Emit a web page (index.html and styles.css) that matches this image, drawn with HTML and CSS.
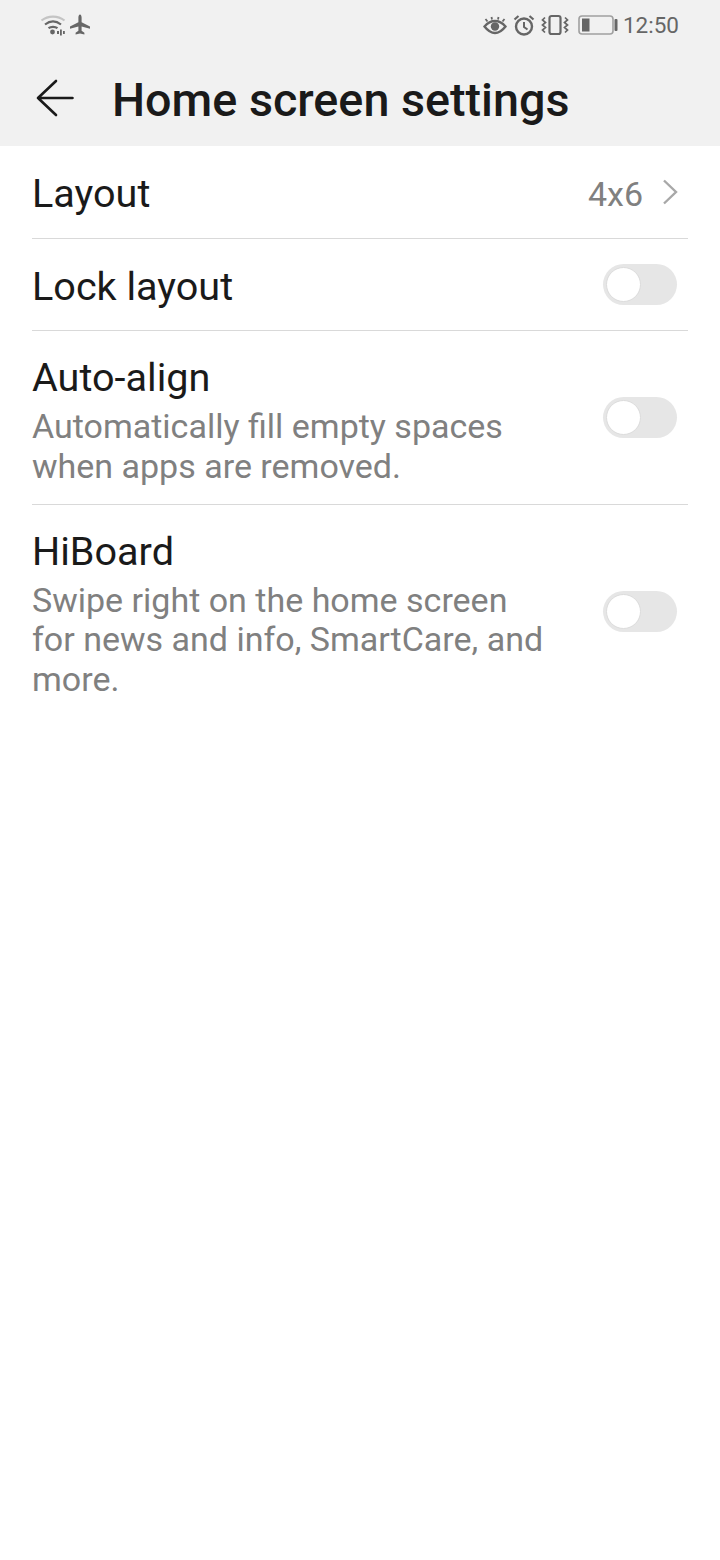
FILE: index.html
```html
<!DOCTYPE html>
<html>
	<head>
		<meta charset="utf-8">
		<meta name="viewport" content="width=device-width, initial-scale=1.0">
		<link rel="stylesheet" href="styles.css">
		<title>Home screen settings</title>
	</head>
	<body>
		<header class="top">
			<div class="status">
				<div class="status-left">
					<svg class="ic-wifi" width="26" height="22" viewBox="0 0 26 22">
						<path d="M1.500 6.500C8 1.200 18 1.200 24.500 6.500" fill="none" stroke="#c4c4c4" stroke-width="2.200"/>
						<path d="M5 10.500C10 6.500 16 6.500 21 10.500" fill="none" stroke="#666" stroke-width="2.200"/>
						<path d="M8.500 14.200C11 12.300 15 12.300 17.500 14.200" fill="none" stroke="#666" stroke-width="2.200"/>
						<circle cx="12.500" cy="18" r="2.400" fill="#666"/>
						<path d="M17 17h2v3h-2zM20 15.500h1.800v6H20zM23 17h1.800v3H23z" fill="#666"/>
					</svg>
					<svg class="ic-plane" width="22" height="22" viewBox="0 0 22 22">
						<path d="M11 0.500c1 0 1.600 1.500 1.600 3v4.800l8.400 4.200v2.200l-8.400-2.200v4.200l2.800 2V20.500l-4.400-1-4.400 1v-1.800l2.800-2v-4.200L1 14.700v-2.200l8.400-4.200V3.500c0-1.500.6-3 1.600-3z" fill="#666"/>
					</svg>
				</div>
				<div class="status-right">
					<svg class="ic-eye" width="24" height="22" viewBox="0 0 24 22">
						<path d="M1.500 12.500C5 8.500 8.500 7 12 7S19 8.500 22.500 12.500C19 17 15.500 19 12 19S5 17 1.500 12.500z" fill="none" stroke="#666" stroke-width="2.400"/>
						<circle cx="12" cy="12.500" r="4.200" fill="#666"/>
						<path d="M4.500 7.500L2.500 5M9 5.500L8.500 3M15 5.500L15.500 3M19.500 7.500L21.500 5" stroke="#666" stroke-width="1.800"/>
					</svg>
					<svg class="ic-alarm" width="22" height="22" viewBox="0 0 22 22">
						<circle cx="11" cy="12.500" r="8" fill="none" stroke="#666" stroke-width="2.400"/>
						<path d="M11 8V13L14.500 15.500" fill="none" stroke="#666" stroke-width="2"/>
						<path d="M1.500 5.500L5.500 2M20.500 5.500L16.500 2" stroke="#666" stroke-width="2.200"/>
					</svg>
					<svg class="ic-vibrate" width="28" height="22" viewBox="0 0 28 22">
						<rect x="8.500" y="2" width="11" height="18" rx="2" fill="none" stroke="#666" stroke-width="2.200"/>
						<path d="M4 3.500l-2.500 2.500 3 2.500-3 2.500 3 2.500-3 2.500 2.500 2.500M24 3.500l2.500 2.500-3 2.500 3 2.500-3 2.500 3 2.500-2.500 2.500" fill="none" stroke="#666" stroke-width="1.700"/>
					</svg>
					<svg class="ic-batt" width="40" height="22" viewBox="0 0 40 22">
						<rect x="1" y="2" width="34" height="18" rx="3" fill="none" stroke="#a0a0a0" stroke-width="1.600"/>
						<rect x="4" y="4.500" width="7.500" height="13" fill="#666"/>
						<rect x="36.500" y="5" width="3" height="12" rx="1" fill="#666"/>
					</svg>
					<span class="clock">12:50</span>
				</div>
			</div>
			<div class="title-bar">
				<svg class="back" width="40" height="40" viewBox="0 0 40 40">
					<path d="M37.500 20H3M21 3L3 20L21 37" fill="none" stroke="#1a1a1a" stroke-width="2.600" stroke-linecap="round" stroke-linejoin="round"/>
				</svg>
				<h1>Home screen settings</h1>
			</div>
		</header>
		<main class="list">
			<div class="row row-layout">
				<div class="label">Layout</div>
				<div class="value">4x6</div>
				<svg class="chev" width="16" height="26" viewBox="0 0 16 26">
					<path d="M2 1.500L14 13L2 24.500" fill="none" stroke="#a8a8a8" stroke-width="2.400"/>
				</svg>
			</div>
			<div class="row row-lock">
				<div class="label">Lock layout</div>
				<div class="switch"><span class="knob"></span></div>
			</div>
			<div class="row row-align">
				<div class="text">
					<div class="label">Auto-align</div>
					<p class="desc">Automatically fill empty spaces<br>when apps are removed.</p>
				</div>
				<div class="switch"><span class="knob"></span></div>
			</div>
			<div class="row row-board">
				<div class="text">
					<div class="label">HiBoard</div>
					<p class="desc">Swipe right on the home screen<br>for news and info, SmartCare, and<br>more.</p>
				</div>
				<div class="switch"><span class="knob"></span></div>
			</div>
		</main>
	</body>
</html>
```
FILE: styles.css
```css
* {
	margin: 0;
	padding: 0;
	box-sizing: border-box;
}

body {
	width: 720px;
	height: 1560px;
	background-color: #fff;
	font-family: Roboto, "Noto Sans", sans-serif;
	overflow: hidden;
}

.top {
	height: 146px;
	background-color: #f1f1f1;
}

.status {
	display: flex;
	justify-content: space-between;
	align-items: center;
	height: 50px;
	padding: 0 41px 0 40px;
}

.status-left,
.status-right {
	display: flex;
	align-items: center;
}

.ic-plane {
	margin-left: 3px;
}

.ic-alarm {
	margin-left: 6px;
}

.ic-vibrate {
	margin-left: 6px;
}

.ic-batt {
	margin-left: 9px;
}

.clock {
	margin-left: 5px;
	font-size: 22.500px;
	color: #666;
}

.title-bar {
	display: flex;
	align-items: center;
	height: 96px;
	padding: 0 0 0 35px;
}

.back {
	margin-right: 37px;
}

h1 {
	padding-top: 3px;
	font-size: 46.700px;
	font-weight: 500;
	color: #1a1a1a;
}

.list {
	padding: 0 32px;
}

.row {
	display: flex;
	align-items: center;
	border-bottom: 1px solid #d9d9d9;
	color: #1a1a1a;
}

.row-layout {
	height: 93px;
}

.row-lock {
	height: 92px;
}

.row-align {
	height: 174px;
}

.row-board {
	height: 212px;
	border-bottom: 0;
}

.row-layout .label,
.row-lock .label,
.row-layout .value {
	padding-top: 4px;
}

.text {
	flex: 1;
	margin-top: 6px;
}

.label {
	flex: 1;
	font-size: 39.600px;
	line-height: 46px;
}

.desc {
	margin-top: 6px;
	font-size: 34px;
	line-height: 39.500px;
	color: #808080;
}

.value {
	margin-right: 19px;
	font-size: 34px;
	color: #808080;
}

.chev {
	margin-right: 10px;
}

.switch {
	position: relative;
	margin-right: 11px;
	width: 74px;
	height: 41px;
	border-radius: 21px;
	background-color: #e6e6e6;
}

.knob {
	position: absolute;
	top: 3px;
	left: 3px;
	width: 35px;
	height: 35px;
	border-radius: 50%;
	border: 1px solid #dcdcdc;
	background-color: #fff;
}
```
